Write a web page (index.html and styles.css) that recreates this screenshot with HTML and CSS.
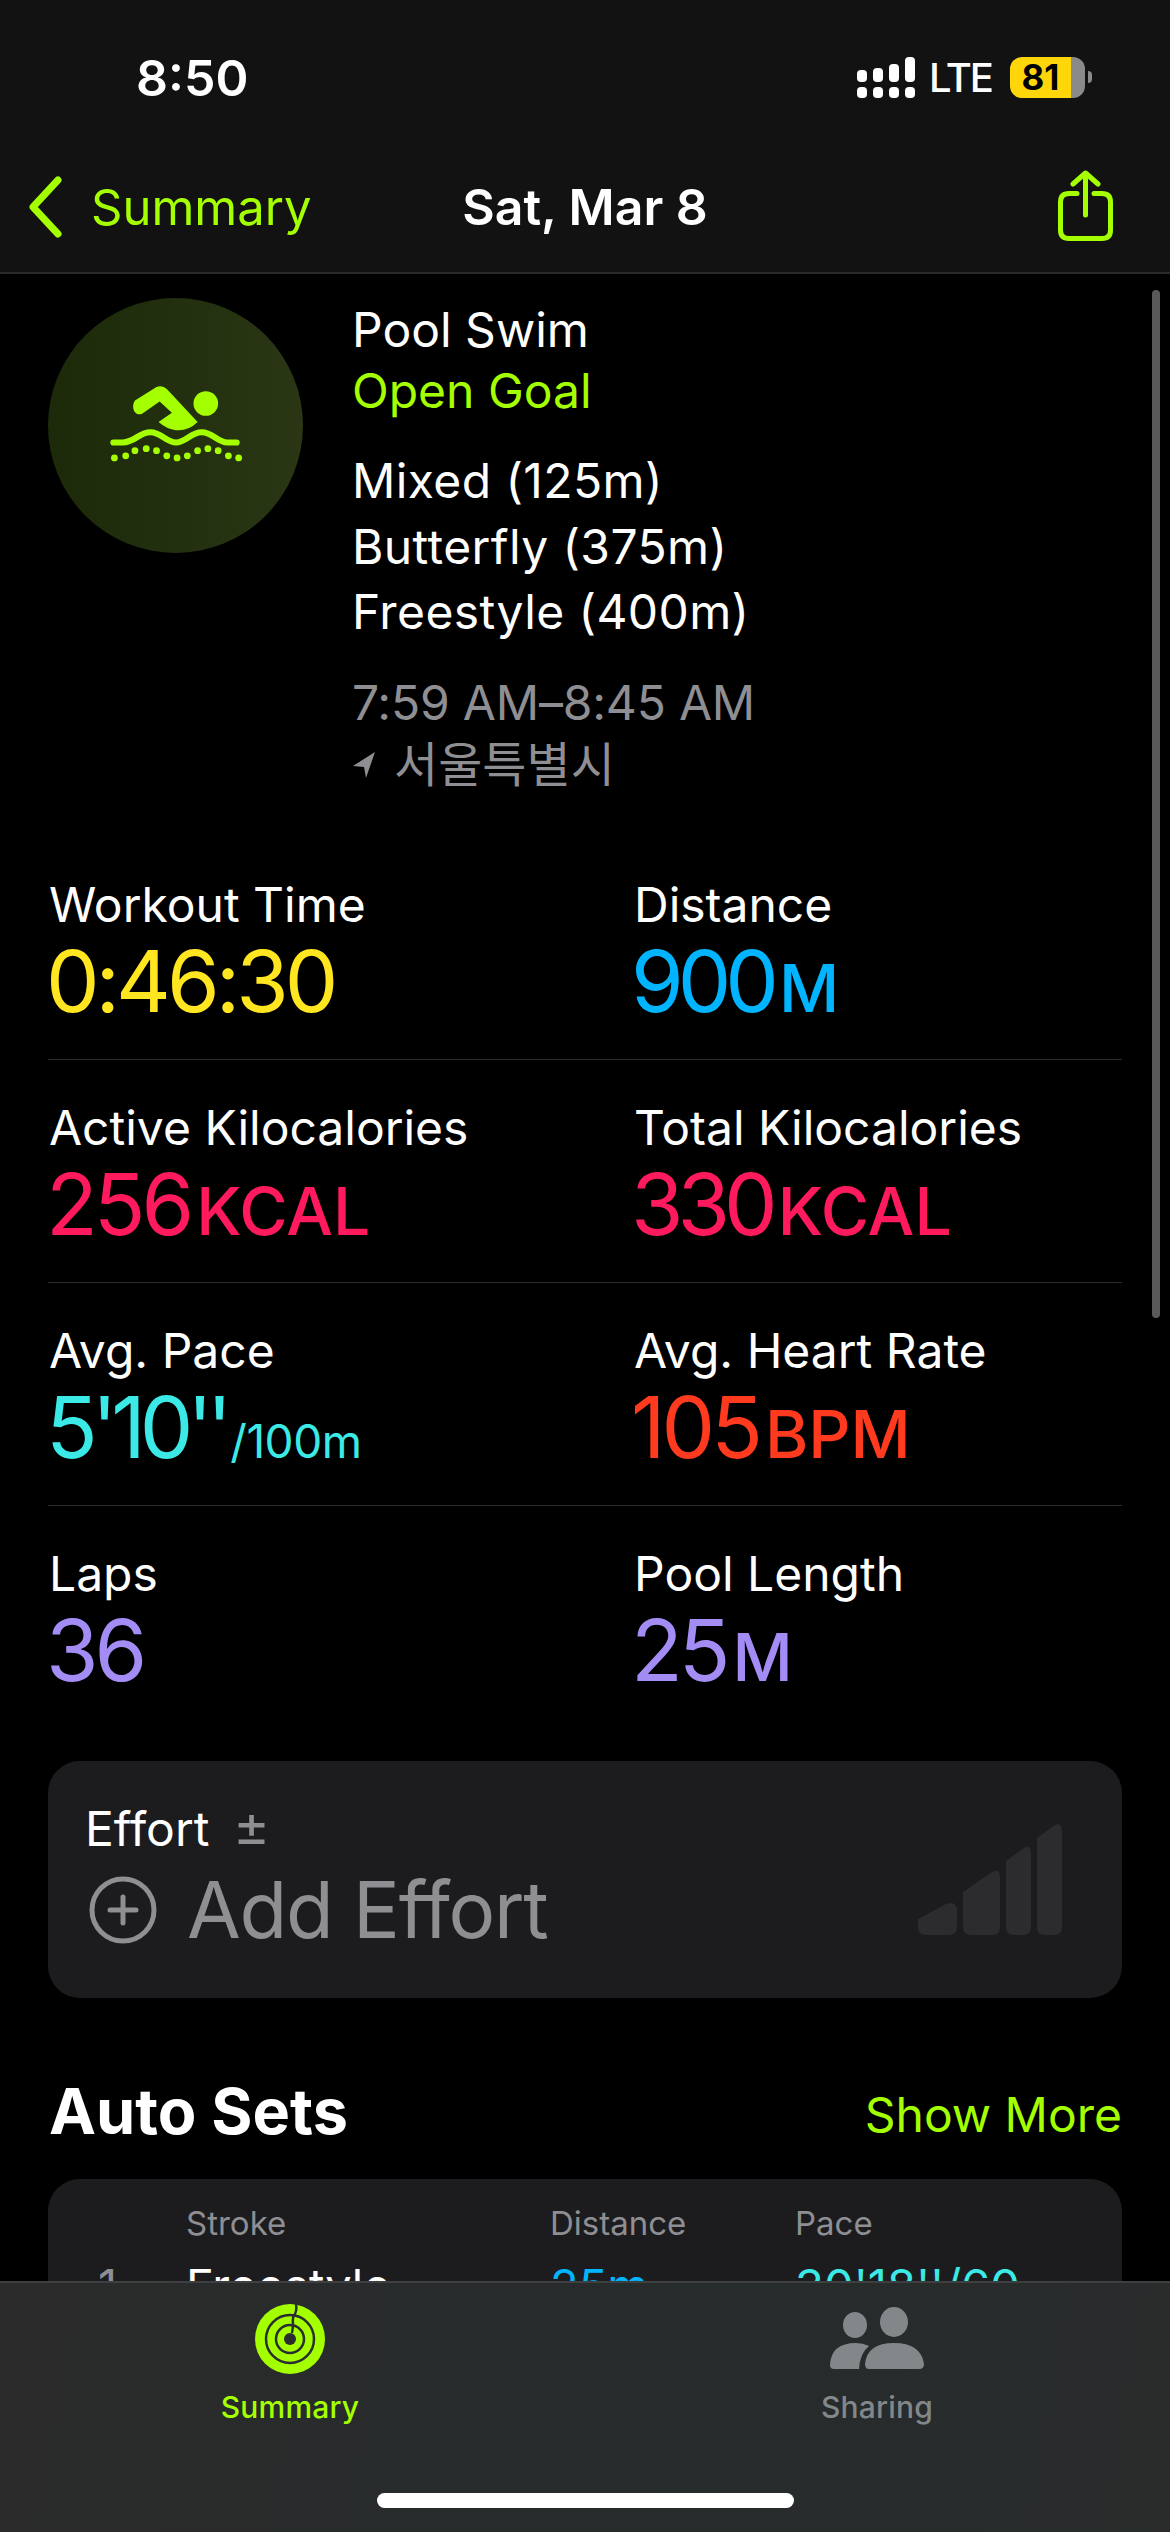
FILE: index.html
```html
<!DOCTYPE html>
<html lang="en">
<head>
    <meta charset="UTF-8">
    <meta name="viewport" content="width=device-width, initial-scale=1.0">
    <title>Workout Detail</title>
    <link rel="stylesheet" href="styles.css">
</head>
<body>
<div class="screen">

    <header class="top">
        <div class="status">
            <span class="clock">8:50</span>
            <div class="status-right">
                <svg class="signal" width="58" height="42" viewBox="0 0 58 42" fill="#fff">
                    <rect x="0" y="13" width="10" height="12" rx="4"/>
                    <rect x="16" y="11" width="10" height="14" rx="4"/>
                    <rect x="32" y="7" width="10" height="18" rx="4"/>
                    <rect x="48" y="0" width="10" height="25" rx="4"/>
                    <rect x="0" y="30" width="10" height="11" rx="4"/>
                    <rect x="16" y="30" width="10" height="11" rx="4"/>
                    <rect x="32" y="30" width="10" height="11" rx="4"/>
                    <rect x="48" y="30" width="10" height="11" rx="4"/>
                </svg>
                <span class="lte">LTE</span>
                <div class="battery"><span class="battery-level">81</span></div>
                <span class="battery-nub"></span>
            </div>
        </div>
        <nav class="nav">
            <div class="nav-back">
                <svg width="36" height="62" viewBox="0 0 36 62" fill="none" stroke="#a4ff00" stroke-width="7" stroke-linecap="round" stroke-linejoin="round">
                    <path d="M31 4 L6 31 L31 58"/>
                </svg>
                <span>Summary</span>
            </div>
            <span class="nav-title">Sat, Mar 8</span>
            <svg class="nav-share" width="55" height="71" viewBox="0 0 55 71" fill="none" stroke="#a4ff00" stroke-width="5" stroke-linecap="round" stroke-linejoin="round">
                <path d="M19 23.5 H11 Q2.5 23.5 2.5 32 V60 Q2.5 68.5 11 68.5 H44 Q52.5 68.5 52.5 60 V32 Q52.5 23.5 44 23.5 H36"/>
                <path d="M27.5 45 V3 M15 14 L27.5 3 L40 14"/>
            </svg>
        </nav>
    </header>

    <main class="content">
        <section class="intro">
            <div class="intro-badge">
                <svg class="intro-swim" width="134" height="76" viewBox="108 386 130 74" fill="#a4ff00">
                    <path d="M134 400 L155 387 Q161 385 165 389 L195 421 Q186 430 174 429 Q165 428 157 421 L170 412 L158 401 L141 413 Q136 415 133 410 Q131 404 134 400 Z"/>
                    <circle cx="203" cy="403" r="12"/>
                    <path d="M113 441 H122 C134 441 138 431 149 431 C160 431 164 441 174 441 C184 441 188 431 199 431 C210 431 214 441 224 441 H233" fill="none" stroke="#a4ff00" stroke-width="6" stroke-linecap="round"/>
                    <circle cx="114" cy="456" r="3.3"/><circle cx="125" cy="454" r="3.3"/><circle cx="134" cy="449" r="3.3"/>
                    <circle cx="145" cy="447" r="3.3"/><circle cx="155" cy="449" r="3.3"/><circle cx="165" cy="454" r="3.3"/>
                    <circle cx="175" cy="456" r="3.3"/><circle cx="185" cy="454" r="3.3"/><circle cx="195" cy="449" r="3.3"/>
                    <circle cx="205" cy="447" r="3.3"/><circle cx="215" cy="449" r="3.3"/><circle cx="225" cy="454" r="3.3"/>
                    <circle cx="235" cy="456" r="3.3"/>
                </svg>
            </div>
            <div class="intro-text">
                <p>Pool Swim</p>
                <p class="lime">Open Goal</p>
                <div class="intro-group intro-strokes">
                    <p>Mixed (125m)</p>
                    <p>Butterfly (375m)</p>
                    <p>Freestyle (400m)</p>
                </div>
                <div class="intro-group intro-when muted">
                    <p class="intro-time">7:59 AM–8:45 AM</p>
                    <p class="intro-place">
                        <svg width="24" height="28" viewBox="0 0 24 28" fill="#8e8e93"><path d="M23 1 L1 15 L12 16 L14 27 Z"/></svg>
                        서울특별시
                    </p>
                </div>
            </div>
        </section>

        <section class="stats">
            <div class="stat">
                <div class="stat-label">Workout Time</div>
                <div class="stat-value yellow">0:46:30</div>
            </div>
            <div class="stat">
                <div class="stat-label">Distance</div>
                <div class="stat-value blue stat-tight">900<small>M</small></div>
            </div>
            <div class="stat">
                <div class="stat-label">Active Kilocalories</div>
                <div class="stat-value pink">256<small>KCAL</small></div>
            </div>
            <div class="stat">
                <div class="stat-label">Total Kilocalories</div>
                <div class="stat-value pink stat-tight">330<small>KCAL</small></div>
            </div>
            <div class="stat">
                <div class="stat-label">Avg. Pace</div>
                <div class="stat-value cyan stat-tight">5'10''<small class="stat-unit-low">/100m</small></div>
            </div>
            <div class="stat">
                <div class="stat-label">Avg. Heart Rate</div>
                <div class="stat-value red">105<small>BPM</small></div>
            </div>
            <div class="stat">
                <div class="stat-label">Laps</div>
                <div class="stat-value purple">36</div>
            </div>
            <div class="stat">
                <div class="stat-label">Pool Length</div>
                <div class="stat-value purple">25<small>M</small></div>
            </div>
        </section>

        <section class="effort">
            <div class="effort-left">
                <div class="effort-title">Effort <span class="effort-sign">±</span></div>
                <div class="effort-add">
                    <svg width="68" height="68" viewBox="0 0 68 68" fill="none" stroke="#8e8e93" stroke-width="5" stroke-linecap="round">
                        <circle cx="34" cy="34" r="31"/>
                        <path d="M34 21 V47 M21 34 H47"/>
                    </svg>
                    <span>Add Effort</span>
                </div>
            </div>
            <svg class="effort-bars" width="144" height="111" viewBox="0 0 144 111" fill="#2c2c2e">
                <path d="M0 95 L28 80 Q39 76 39 88 V103 Q39 111 31 111 H8 Q0 111 0 103 Z"/>
                <path d="M45 68 L74 48 Q82 43 82 54 V103 Q82 111 74 111 H53 Q45 111 45 103 Z"/>
                <path d="M88 37 L106 24 Q113 20 113 30 V103 Q113 111 105 111 H96 Q88 111 88 103 Z"/>
                <path d="M119 14 L137 1 Q144 -2 144 8 V103 Q144 111 136 111 H127 Q119 111 119 103 Z"/>
            </svg>
        </section>

        <section class="sets">
            <div class="sets-head">
                <h2>Auto Sets</h2>
                <span class="lime">Show More</span>
            </div>
            <div class="sets-card">
                <div class="sets-row sets-labels">
                    <span></span><span>Stroke</span><span>Distance</span><span>Pace</span>
                </div>
                <div class="sets-row sets-data">
                    <span class="muted">1</span><span>Freestyle</span><span class="blue">25m</span><span class="cyan">30'18''/60</span>
                </div>
            </div>
        </section>

        <div class="scroll-thumb"></div>
    </main>

    <footer class="tabs">
        <div class="tab-items">
            <div class="tab tab-on">
                <svg width="70" height="70" viewBox="0 0 70 70" fill="none" stroke="#2b2e2e" stroke-width="2.5">
                    <circle cx="35" cy="35" r="35" fill="#a4ff00" stroke="none"/>
                    <circle cx="35" cy="35" r="24"/>
                    <circle cx="35" cy="35" r="14"/>
                    <circle cx="35" cy="35" r="6" fill="#2b2e2e" stroke="none"/>
                    <path d="M41 0 Q42 6 40 10 Q37 14 38 19 Q38 24 37 29"/>
                </svg>
                <span>Summary</span>
            </div>
            <div class="tab">
                <svg width="96" height="64" viewBox="0 0 96 64" fill="#82888a">
                    <ellipse cx="26" cy="18" rx="12" ry="13"/>
                    <ellipse cx="65" cy="15" rx="14" ry="15"/>
                    <path d="M1 58 Q2 36 27 36 Q34 36 40 39 Q31 46 30 62 H5 Q1 62 1 58 Z"/>
                    <path d="M36 57 Q38 36 65 36 Q92 36 95 57 Q95 62 90 62 H40 Q36 62 36 57 Z"/>
                </svg>
                <span>Sharing</span>
            </div>
        </div>
        <div class="home-bar"></div>
    </footer>
</div>
</body>
</html>
```

FILE: styles.css
```css
* {
    box-sizing: border-box;
    margin: 0;
    padding: 0;
}
html, body {
    width: 1170px;
    height: 2532px;
    overflow: hidden;
    background: #000;
}
body {
    font-family: Inter, "Noto Sans CJK KR", sans-serif;
    color: #fff;
    font-size: 48px;
}
.screen {
    width: 1170px;
    height: 2532px;
    display: flex;
    flex-direction: column;
    overflow: hidden;
    position: relative;
}
.lime { color: #a4ff00; }
.yellow { color: #ffe620; }
.blue { color: #00b4ff; }
.pink { color: #ff1a5e; }
.cyan { color: #3beae6; }
.red { color: #ff3a1e; }
.purple { color: #a48cf5; }
.muted { color: #8e8e93; }

/* top bar */
.top {
    height: 274px;
    flex: none;
    background: #121212;
    border-bottom: 2px solid #2a2a2a;
}
.status {
    height: 148px;
    padding: 56px 78px 0 136px;
    display: flex;
    justify-content: space-between;
}
.clock {
    font-size: 50px;
    font-weight: 600;
    line-height: 44px;
}
.status-right {
    display: flex;
    align-items: flex-start;
    height: 42px;
    margin-top: 1px;
}
.lte {
    font-size: 40px;
    font-weight: 500;
    line-height: 42px;
    margin-left: 14px;
    letter-spacing: -2px;
}
.battery {
    width: 75px;
    height: 41px;
    margin-left: 18px;
    border-radius: 12px;
    background: linear-gradient(90deg, #ffd60a 82%, #8a8a8a 82%);
}
.battery-level {
    display: block;
    width: 61px;
    text-align: center;
    color: #000;
    font-size: 35px;
    font-weight: 700;
    line-height: 41px;
}
.battery-nub {
    width: 4px;
    height: 12px;
    margin: 14px 0 0 3px;
    background: #8a8a8a;
    border-radius: 0 4px 4px 0;
}
.nav {
    height: 118px;
    position: relative;
    display: flex;
    align-items: center;
    justify-content: space-between;
    padding: 0 57px 0 27px;
}
.nav-back {
    display: flex;
    align-items: center;
    gap: 28px;
    color: #a4ff00;
    font-size: 49px;
}
.nav-title {
    position: absolute;
    left: 0;
    right: 0;
    text-align: center;
    font-size: 50px;
    font-weight: 600;
}
.nav-share {
    margin-top: -3px;
}

/* scrolling part */
.content {
    flex: 1;
    padding: 24px 48px 0;
    position: relative;
    overflow: hidden;
}
.scroll-thumb {
    position: absolute;
    left: 1152px;
    top: 16px;
    width: 8px;
    height: 1028px;
    border-radius: 4px;
    background: #5a5a5a;
}
.intro {
    display: flex;
    gap: 49px;
    height: 539px;
}
.intro-badge {
    width: 255px;
    height: 255px;
    flex: none;
    border-radius: 50%;
    background: linear-gradient(90deg, #1c2a0a, #2a3614);
    display: flex;
    align-items: center;
    justify-content: center;
}
.intro-swim {
    margin: -4px 0 0 -1px;
}
.intro-text {
    font-size: 48px;
    line-height: 61px;
    padding-top: 1px;
}
.intro-group p {
    line-height: 65.5px;
}
.intro-strokes {
    margin-top: 27px;
    letter-spacing: .4px;
}
.intro-when {
    margin-top: 25px;
}
.intro-time {
    letter-spacing: -.2px;
}
.intro-group .intro-place {
    display: flex;
    align-items: center;
    gap: 18px;
    line-height: 60px;
}

.stats {
    display: grid;
    grid-template-columns: 585px 489px;
}
.stat {
    height: 223px;
    padding: 38px 0 0 1px;
    border-bottom: 1px solid #2c2c2e;
}
.stat:nth-last-child(-n+2) {
    border-bottom: none;
}
.stat-label {
    font-size: 48px;
    line-height: 60px;
}
.stat-value {
    font-size: 85px;
    line-height: 94px;
    white-space: nowrap;
    letter-spacing: -4px;
    margin-left: -3px;
}
.stat-value small {
    font-size: 66px;
    font-weight: 500;
    margin-left: 6px;
    letter-spacing: 0;
}
.stat-tight {
    letter-spacing: -6px;
}
.stat-value .stat-unit-low {
    font-size: 46px;
    font-weight: 400;
    letter-spacing: -.5px;
    margin-left: 4px;
}

.effort {
    height: 237px;
    margin-top: 32px;
    border-radius: 32px;
    background: #1c1c1e;
    display: flex;
    justify-content: space-between;
    padding: 39px 60px 0 37px;
}
.effort-title {
    font-size: 48px;
    line-height: 58px;
}
.effort-sign {
    color: #8e8e93;
    margin-left: 10px;
    font-size: 56px;
    line-height: 0;
}
.effort-add {
    display: flex;
    align-items: center;
    gap: 30px;
    color: #8e8e93;
    font-size: 78px;
    line-height: 88px;
    letter-spacing: -1.3px;
    margin-left: 4px;
    margin-top: 8px;
}
.effort-bars {
    margin-top: 24px;
}

.sets {
    margin-top: 74px;
}
.sets-head {
    display: flex;
    justify-content: space-between;
    align-items: center;
    height: 78px;
    padding-left: 1px;
}
.sets-head h2 {
    font-size: 63px;
    font-weight: 700;
}
.sets-head span {
    font-size: 48px;
    margin-top: 6px;
}
.sets-card {
    height: 200px;
    margin-top: 29px;
    border-radius: 32px 32px 0 0;
    background: #1c1c1e;
    padding-top: 22px;
}
.sets-row {
    display: grid;
    grid-template-columns: 138px 364px 245px 1fr;
}
.sets-row span:first-child {
    padding-left: 50px;
}
.sets-labels {
    color: #8e8e93;
    font-size: 33px;
    line-height: 44px;
}
.sets-data {
    font-size: 47px;
    line-height: 56px;
    margin-top: 13px;
}

/* bottom tabs */
.tabs {
    position: absolute;
    left: 0;
    right: 0;
    top: 2281px;
    height: 251px;
    background: linear-gradient(100deg, #2b2b2b, #262b2c 60%, #2a2c2c);
    border-top: 2px solid #3d3f40;
}
.tab-items {
    display: grid;
    grid-template-columns: 290px 587px;
    padding-top: 21px;
    height: 210px;
}
.tab {
    width: 0;
    justify-self: end;
    display: flex;
    flex-direction: column;
    align-items: center;
    color: #82888a;
    font-size: 30px;
    font-weight: 500;
    letter-spacing: .2px;
    height: 130px;
}
.tab svg {
    flex: none;
    height: 70px;
}
.tab span {
    margin-top: 15px;
    line-height: 36px;
}
.tab-on {
    color: #a4ff00;
}
.home-bar {
    width: 417px;
    height: 15px;
    margin: 0 auto;
    border-radius: 8px;
    background: #fff;
}
```
